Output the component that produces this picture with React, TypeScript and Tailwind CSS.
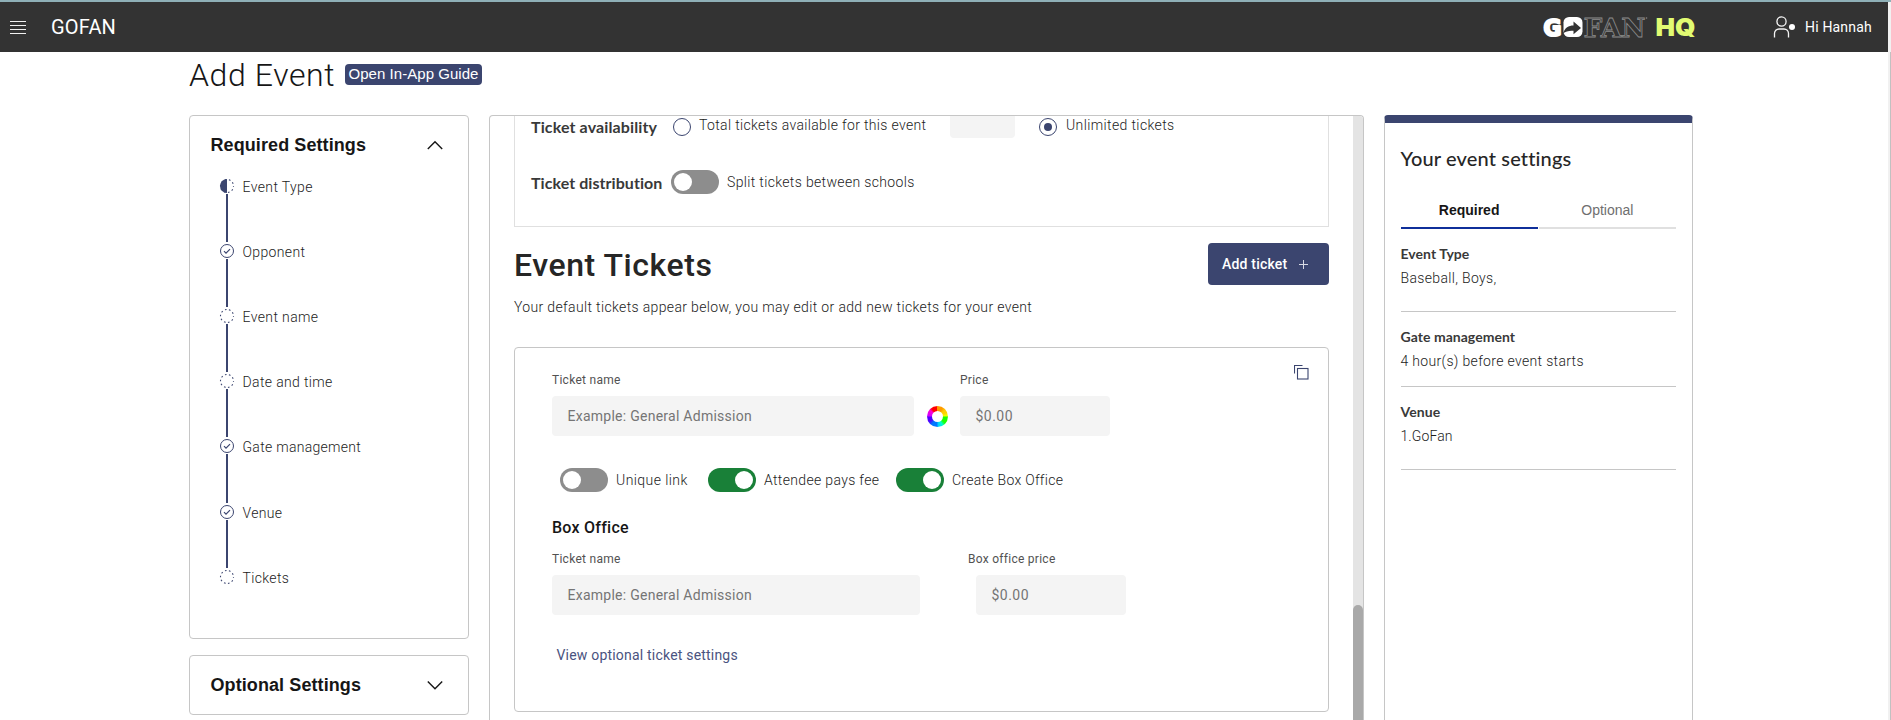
import type { ReactNode } from 'react';

const body = "font-['Roboto',sans-serif] text-sm leading-5 font-light text-[#1c1c1c]";

type StepState = 'half' | 'done' | 'empty';

const steps: { label: string; state: StepState; spacing: string }[] = [
  { label: 'Event Type', state: 'half', spacing: 'tracking-[0.38px]' },
  { label: 'Opponent', state: 'done', spacing: 'tracking-[0.36px]' },
  { label: 'Event name', state: 'empty', spacing: 'tracking-[0.38px]' },
  { label: 'Date and time', state: 'empty', spacing: 'tracking-[0.36px]' },
  { label: 'Gate management', state: 'done', spacing: 'tracking-[0.29px]' },
  { label: 'Venue', state: 'done', spacing: 'tracking-[0.3px]' },
  { label: 'Tickets', state: 'empty', spacing: 'tracking-[0.35px]' },
];

function StepIcon({ state }: { state: StepState }) {
  return (
    <svg className="block h-4 w-4 shrink-0" viewBox="0 0 16 16" fill="none" stroke="#3b456f">
      {state === 'done' ? (
        <>
          <circle cx="8" cy="8" r="6.5" />
          <path d="M5 8.2l2 2 4-4" strokeWidth="1.2" />
        </>
      ) : (
        <circle cx="8" cy="8" r="6.5" strokeWidth="1.1" strokeDasharray="1.6 2.48" strokeDashoffset="0.8" />
      )}
      {state === 'half' && <path d="M8 1a7 7 0 0 0 0 14z" fill="#3b456f" stroke="none" />}
    </svg>
  );
}

function Chevron({ up = false }: { up?: boolean }) {
  return (
    <svg className="h-4 w-4" viewBox="0 0 16 16" fill="none" stroke="#161616" strokeWidth="1.4">
      <path d={up ? 'M0.8 12L8 4.7l7.2 7.3' : 'M0.8 4.5L8 11.8l7.2-7.3'} />
    </svg>
  );
}

function Toggle({ on = false }: { on?: boolean }) {
  return (
    <span
      className={
        on
          ? 'flex h-6 w-12 shrink-0 items-center justify-end rounded-full bg-[#198038] p-[3px]'
          : 'flex h-6 w-12 shrink-0 items-center rounded-full bg-[#8d8d8d] p-[3px]'
      }
    >
      <span className="h-[18px] w-[18px] rounded-full bg-white" />
    </span>
  );
}

function Radio({ checked = false }: { checked?: boolean }) {
  return (
    <span className="flex h-[18px] w-[18px] shrink-0 items-center justify-center rounded-full border border-[#3b456f]">
      {checked && <span className="h-2 w-2 rounded-full bg-[#3b456f]" />}
    </span>
  );
}

function Label({ children }: { children: ReactNode }) {
  return (
    <div className="font-['Roboto',sans-serif] text-xs leading-4 tracking-[0.27px] text-[#525252]">{children}</div>
  );
}

function Field({ children, className }: { children: ReactNode; className: string }) {
  return (
    <div
      className={`flex h-10 items-center rounded bg-[#f4f4f4] pl-[15.5px] font-['Roboto',sans-serif] text-sm text-[#757575] ${className}`}
    >
      {children}
    </div>
  );
}

function ColorWheel() {
  return (
    <span className="flex h-[21px] w-[21px] items-center justify-center rounded-full bg-[conic-gradient(#ff9a00_0_30deg,#ffd000_50deg_65deg,#f0ff00_85deg,#1eff00_95deg_130deg,#00ffd0_150deg,#00d0ff_175deg,#0078ff_185deg_215deg,#5000ff_240deg_265deg,#d000ff_275deg,#ff00d0_310deg,#ff0000_325deg_358deg,#ff9a00)]">
      <span className="h-[11px] w-[11px] rounded-full bg-white" />
    </span>
  );
}

function Logo() {
  return (
    <svg className="block h-10 w-[160px]" viewBox="-3 -8 160 40">
      <text x="0.5" y="20.5" fontFamily="DejaVu Sans" fontWeight="700" fontSize="22.5" fill="#fff" stroke="#fff" strokeWidth="2.2" strokeLinejoin="round" textLength="18" lengthAdjust="spacingAndGlyphs">
        G
      </text>
      <rect x="20.5" y="2" width="19" height="20" rx="5.5" fill="#fff" />
      <path d="M20 18.5c2-6 5.500-8 10.500-8v-4l7.500 6.500-7.500 6.200v-3.400c-4.500-.4-7.500.6-10.500 2.700z" fill="#333" />
      <text x="40.5" y="21.5" fontFamily="DejaVu Serif" fontWeight="700" fontSize="26.5" fill="#333" stroke="#8c8c8c" strokeWidth="0.8" textLength="62" lengthAdjust="spacingAndGlyphs">
        FAN
      </text>
      <circle cx="103.5" cy="3" r="0.8" fill="#888" />
      <text x="112.5" y="20.6" fontFamily="Inter" fontWeight="900" fontSize="25" fill="#e1fb72" textLength="40" lengthAdjust="spacingAndGlyphs">
        HQ
      </text>
    </svg>
  );
}

function Header() {
  return (
    <header className="flex h-[52px] shrink-0 border-t-2 border-[#8fb0b7]">
      <div className="flex h-[50px] w-[1888px] items-center bg-[#333] text-white">
        <svg className="ml-[10px] h-4 w-4" viewBox="0 0 16 16" fill="#f0f0f0">
          <path d="M0 2h16v1H0zM0 6h16v1H0zM0 10h16v1H0zM0 14h16v1H0z" />
        </svg>
        <div className="ml-[25px] font-['Roboto',sans-serif] text-xl leading-6 font-normal tracking-[0.2px]">GOFAN</div>
        <div className="ml-auto">
          <Logo />
        </div>
        <svg className="ml-[72px] h-6 w-6" viewBox="0 0 24 24" fill="none" stroke="#f4f4f4" strokeWidth="1.3">
          <circle cx="9.5" cy="6.5" r="4.6" />
          <path d="M2.500 22.500v-4a4.500 4.500 0 0 1 4.500-4.500h5a4.500 4.500 0 0 1 4.500 4.500v4" />
          <circle cx="20" cy="12" r="3" fill="#fff" stroke="none" />
        </svg>
        <div className="mr-4 ml-[9px] w-[67px] font-['Roboto',sans-serif] text-sm leading-5 font-normal tracking-[0.18px] whitespace-nowrap">
          Hi Hannah
        </div>
      </div>
      <div className="grow bg-[#f1f1f1]" />
    </header>
  );
}

function Sidebar() {
  const heading =
    "font-['Liberation_Sans',Arial,sans-serif] text-lg leading-6 font-bold tracking-[0.09px] text-[#161616]";
  return (
    <aside className="flex w-[280px] shrink-0 flex-col gap-4">
      <section className="h-[524px] rounded border border-[#c6c6c6] pt-[17px] pl-[20.5px]">
        <div className="flex items-center justify-between pr-[25px]">
          <h2 className={heading}>Required Settings</h2>
          <Chevron up />
        </div>
        <ol className="mt-[21px] pl-[8.5px]">
          {steps.map((step, i) => (
            <li key={step.label} className={i === 4 ? 'flex h-[66px] gap-[7.5px]' : 'flex h-[65px] gap-[7.5px]'}>
              <div className="flex flex-col items-center">
                <StepIcon state={step.state} />
                {i < steps.length - 1 && <span className="mb-px w-0.5 grow bg-[#3b456f]" />}
              </div>
              <span className={`${body} ${step.spacing} -mt-px`}>{step.label}</span>
            </li>
          ))}
        </ol>
      </section>
      <section className="flex h-[60px] items-center justify-between rounded border border-[#c6c6c6] pr-[25px] pl-[20.5px]">
        <h2 className={heading}>Optional Settings</h2>
        <Chevron />
      </section>
    </aside>
  );
}

function TicketCard() {
  const toggleText = `${body} ml-2`;
  return (
    <section className="relative mt-[30px] h-[365px] rounded border border-[#c6c6c6] pt-6 pl-[37px]">
      <svg className="absolute top-[17px] right-[19px] h-[15px] w-[15px]" viewBox="0 0 15 15" fill="none" stroke="#3b456f" strokeWidth="1.1">
        <path d="M0.500 8.500v-8h8" />
        <rect x="3.5" y="3.5" width="10.5" height="10.5" />
      </svg>
      <div className="flex">
        <div className="w-[362px]">
          <Label>Ticket name</Label>
          <Field className="mt-2 w-[362px] tracking-[0.26px]">Example: General Admission</Field>
        </div>
        <div className="mt-[34px] ml-[12.5px] w-[33.5px]">
          <ColorWheel />
        </div>
        <div>
          <Label>Price</Label>
          <Field className="mt-2 w-[150px] tracking-[0.48px]">$0.00</Field>
        </div>
      </div>
      <div className="mt-8 ml-2 flex items-center">
        <Toggle />
        <span className={`${toggleText} w-[92px] tracking-[0.42px]`}>Unique link</span>
        <Toggle on />
        <span className={`${toggleText} w-[132px] tracking-[0.34px]`}>Attendee pays fee</span>
        <Toggle on />
        <span className={`${toggleText} tracking-[0.28px]`}>Create Box Office</span>
      </div>
      <h3 className="mt-6 font-['Roboto',sans-serif] text-base leading-6 font-medium tracking-[0.25px] text-[#161616]">
        Box Office
      </h3>
      <div className="mt-[11px] flex">
        <div className="w-[416px]">
          <Label>Ticket name</Label>
          <Field className="mt-2 w-[368px] tracking-[0.26px]">Example: General Admission</Field>
        </div>
        <div>
          <Label>Box office price</Label>
          <Field className="mt-2 ml-2 w-[150px] tracking-[0.48px]">$0.00</Field>
        </div>
      </div>
      <div className="mt-[30px] ml-[4.5px] font-['Roboto',sans-serif] text-sm leading-5 tracking-[0.2px] text-[#4a5380]">
        View optional ticket settings
      </div>
    </section>
  );
}

function MainPanel() {
  const rowLabel = "font-['Lato',sans-serif] text-base leading-5 font-bold text-[#393939]";
  return (
    <main className="ml-5 flex h-[640px] w-[875px] shrink-0 overflow-hidden rounded-t border border-b-0 border-[#c6c6c6]">
      <div className="w-[839px] shrink-0 pl-6">
        <section className="h-[111px] border border-t-0 border-[#e0e0e0] pl-4">
          <div className="flex h-[22px] items-center">
            <span className={`${rowLabel} w-[142px] tracking-[0.12px]`}>Ticket availability</span>
            <Radio />
            <span className={`${body} -mt-1 ml-2 w-[251px] tracking-[0.34px]`}>
              Total tickets available for this event
            </span>
            <span className="h-[22px] w-[65px] rounded-b bg-[#f4f4f4]" />
            <span className="ml-6">
              <Radio checked />
            </span>
            <span className={`${body} -mt-1 ml-[9px] tracking-[0.38px]`}>Unlimited tickets</span>
          </div>
          <div className="mt-8 flex h-6 items-center">
            <span className={`${rowLabel} mt-px w-[140px] tracking-[0.06px]`}>Ticket distribution</span>
            <Toggle />
            <span className={`${body} ml-2 tracking-[0.34px]`}>Split tickets between schools</span>
          </div>
        </section>
        <div className="mt-4 flex items-center justify-between">
          <h2 className="mt-px font-['Roboto',sans-serif] text-[32px] leading-10 font-medium tracking-[0.56px] text-[#262626]">
            Event Tickets
          </h2>
          <button className="flex h-[42px] w-[121px] items-center rounded bg-[#3b456f] pl-[14px] font-['Roboto',sans-serif] text-sm font-medium tracking-[0.2px] text-white">
            Add ticket
            <svg className="ml-3 h-[9px] w-[9px]" viewBox="0 0 9 9" stroke="#d8dae4" strokeWidth="1">
              <path d="M0 4.500h9M4.500 0v9" />
            </svg>
          </button>
        </div>
        <p className={`${body} mt-3 tracking-[0.35px]`}>
          Your default tickets appear below, you may edit or add new tickets for your event
        </p>
        <TicketCard />
      </div>
      <div className="ml-6 w-[10px] bg-[#e4e4e4] pt-[489px]">
        <div className="h-40 w-[10px] rounded-t-full bg-[#a9a9a9]" />
      </div>
    </main>
  );
}

function SummaryItem({ title, value, className, titleClass, valueClass }: {
  title: string;
  value: string;
  className: string;
  titleClass: string;
  valueClass: string;
}) {
  return (
    <div className={`border-b border-[#c6c6c6] ${className}`}>
      <h4 className={`font-['Lato',sans-serif] text-sm leading-5 font-bold text-[#393939] ${titleClass}`}>{title}</h4>
      <p className={`${body} mt-1 ${valueClass}`}>{value}</p>
    </div>
  );
}

function SummaryPanel() {
  return (
    <aside className="ml-5 h-[640px] w-[309px] shrink-0 overflow-hidden rounded-t border border-t-8 border-b-0 border-[#c6c6c6] border-t-[#3b456f] pr-4 pl-[15.5px]">
      <h3 className="mt-[23px] font-['Lato',sans-serif] text-xl leading-6 font-medium tracking-[0.14px] text-[#262626]">
        Your event settings
      </h3>
      <div className="mt-5 flex gap-px text-center font-['Liberation_Sans',Arial,sans-serif] text-sm leading-5">
        <div className="h-[39px] flex-1 border-b-2 border-[#0f2f9a] pt-[10px] font-bold text-[#161616]">Required</div>
        <div className="h-[39px] flex-1 border-b-2 border-[#e0e0e0] pt-[10px] text-[#6f6f6f]">Optional</div>
      </div>
      <SummaryItem title="Event Type" value="Baseball, Boys," className="h-[83px] pt-[15px]" titleClass="tracking-[0.04px]" valueClass="tracking-[0.35px]" />
      <SummaryItem title="Gate management" value="4 hour(s) before event starts" className="h-[75px] pt-[15px]" titleClass="tracking-[0.04px]" valueClass="tracking-[0.33px]" />
      <SummaryItem title="Venue" value="1.GoFan" className="h-[83px] pt-[15px]" titleClass="tracking-[0.1px]" valueClass="tracking-[0.1px]" />
    </aside>
  );
}

export default function App() {
  return (
    <div className="flex h-[720px] w-[1891px] flex-col overflow-hidden bg-white">
      <Header />
      <div className="flex grow">
        <div className="w-[1888px] pl-[189px]">
          <div className="flex h-[63px] items-start">
            <h1 className="mt-[3px] w-[156px] font-['Roboto',sans-serif] text-[32px] leading-10 font-light tracking-[0.6px] text-[#161616]">
              Add Event
            </h1>
            <button className="mt-3 h-[21px] w-[137px] rounded bg-[#3b456f] pb-px text-center font-['Liberation_Sans',Arial,sans-serif] text-[15px] leading-[18px] tracking-[0.04px] whitespace-nowrap text-white">
              Open In-App Guide
            </button>
          </div>
          <div className="flex">
            <Sidebar />
            <MainPanel />
            <SummaryPanel />
          </div>
        </div>
        <div className="flex w-[3px] justify-end bg-[#f1f1f1]">
          <div className="w-px bg-[#c1c1c1]" />
        </div>
      </div>
    </div>
  );
}
